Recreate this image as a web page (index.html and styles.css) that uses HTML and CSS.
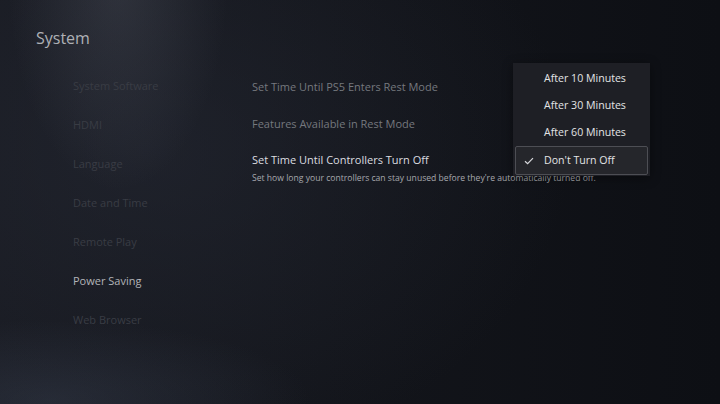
FILE: index.html
```html
<!DOCTYPE html>
<html lang="en">
<head>
<meta charset="utf-8">
<title>System</title>
<link rel="stylesheet" href="styles.css">
</head>
<body>
<div class="screen">
  <header class="header">System</header>
  <div class="main">
    <nav class="nav">
      <div class="nav-item">System Software</div>
      <div class="nav-item">HDMI</div>
      <div class="nav-item">Language</div>
      <div class="nav-item">Date and Time</div>
      <div class="nav-item">Remote Play</div>
      <div class="nav-item active">Power Saving</div>
      <div class="nav-item">Web Browser</div>
    </nav>
    <section class="content">
      <div class="row">Set Time Until PS5 Enters Rest Mode</div>
      <div class="row">Features Available in Rest Mode</div>
      <div class="row focus">
        <div class="row-title">Set Time Until Controllers Turn Off</div>
        <div class="row-desc">Set how long your controllers can stay unused before they're automatically turned off.</div>
      </div>
    </section>
  </div>
  <div class="menu">
    <div class="menu-item">After 10 Minutes</div>
    <div class="menu-item">After 30 Minutes</div>
    <div class="menu-item">After 60 Minutes</div>
    <div class="menu-item selected">
      <svg class="check" width="10" height="8" viewBox="0 0 10 8"><path d="M1 4.2 L3.6 6.6 L9 1.2" fill="none" stroke="#d8d9dc" stroke-width="1.2"/></svg>
      Don't Turn Off
    </div>
  </div>
</div>
</body>
</html>
```

FILE: styles.css
```css
html, body {
  margin: 0;
  padding: 0;
  background: #111319;
}

.screen {
  position: relative;
  width: 720px;
  height: 404px;
  overflow: hidden;
  font-family: "Open Sans", "Noto Sans", sans-serif;
  background:
    radial-gradient(ellipse 110px 210px at 118px -20px, rgba(120, 125, 140, 0.22), rgba(120, 125, 140, 0) 100%),
    radial-gradient(ellipse 260px 80px at 50px 400px, rgba(70, 80, 100, 0.3), rgba(70, 80, 100, 0) 100%),
    radial-gradient(ellipse 420px 320px at 150px 150px, rgba(40, 44, 56, 0.5), rgba(40, 44, 56, 0) 100%),
    linear-gradient(90deg, #181a21 0%, #13151b 45%, #0d0f14 100%);
}

.header {
  box-sizing: border-box;
  height: 66px;
  padding: 27px 0 0 36px;
  font-size: 16px;
  line-height: 22px;
  color: #aeb0b5;
}

.main {
  display: flex;
}

.nav {
  width: 179px;
  padding-left: 73px;
}

.nav-item {
  height: 39px;
  line-height: 39px;
  font-size: 11px;
  color: #393c44;
  white-space: nowrap;
}

.nav-item.active {
  color: #b2b4b8;
}

.content {
  padding-top: 1.5px;
  font-size: 11px;
}

.row {
  height: 37px;
  line-height: 37px;
  color: #75787e;
  white-space: nowrap;
}

.row.focus {
  height: auto;
  padding-top: 10px;
  line-height: 16px;
}

.row-title {
  color: #dcdde0;
}

.row-desc {
  margin-top: 3px;
  line-height: 14px;
  font-size: 8.6px;
  color: #a6a8ad;
}

.menu {
  position: absolute;
  left: 513px;
  top: 63px;
  width: 137px;
  box-sizing: border-box;
  padding: 2px 0 1px;
  background: #1e1f25;
  box-shadow: 0 2px 10px rgba(0, 0, 0, 0.4);
}

.menu-item {
  height: 27px;
  line-height: 27px;
  padding-left: 31px;
  font-size: 10.6px;
  color: #e3e4e6;
  white-space: nowrap;
}

.menu-item.selected {
  position: relative;
  margin: 0 2px;
  height: 27px;
  padding-left: 28px;
  border: 1px solid #4d4e54;
  border-radius: 2px;
  background: #25262b;
}

.check {
  position: absolute;
  left: 8px;
  top: 10px;
}
```
